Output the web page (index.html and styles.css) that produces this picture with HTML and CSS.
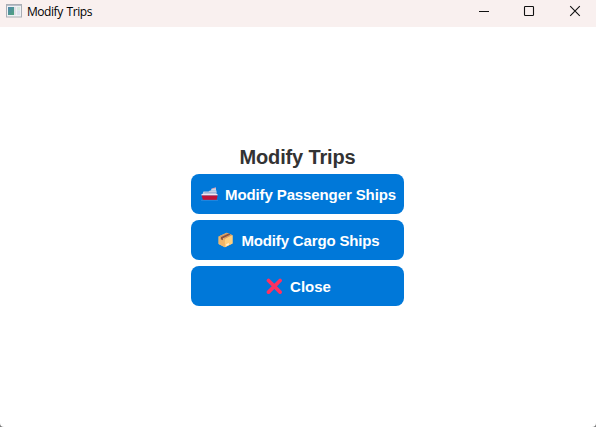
FILE: index.html
```html
<!DOCTYPE html>
<html lang="en">
<head>
<meta charset="utf-8">
<title>Modify Trips</title>
<link rel="stylesheet" href="styles.css">
</head>
<body>
<div class="window">
  <header class="titlebar">
    <svg class="app-icon" width="16" height="14" viewBox="0 0 16 14">
      <defs>
        <linearGradient id="screen" x1="0" y1="0" x2="1" y2="1">
          <stop offset="0" stop-color="#4f86ad"/>
          <stop offset="1" stop-color="#4fa37c"/>
        </linearGradient>
      </defs>
      <rect x=".5" y=".5" width="15" height="12.5" fill="#eff1f4" stroke="#aaaeb5"/>
      <path d="M1 1.5h14" stroke="#b9bfc9"/>
      <rect x="2" y="3" width="6" height="8" fill="url(#screen)"/>
      <rect x="8" y="3" width="2" height="8" fill="#e0e0e6"/>
      <rect x="11" y="3" width="3" height="3.5" fill="#d9eadf"/>
      <rect x="11" y="6.5" width="3" height="4.5" fill="#dde1ef"/>
    </svg>
    <span class="caption">Modify Trips</span>
    <div class="controls">
      <svg width="12" height="12" viewBox="0 0 12 12"><path d="M1 6.5h10" stroke="#111"/></svg>
      <svg width="12" height="12" viewBox="0 0 12 12"><rect x="1.5" y="1.5" width="9" height="9" rx=".8" fill="none" stroke="#111" stroke-width="1.1"/></svg>
      <svg width="12" height="12" viewBox="0 0 12 12"><path d="M1.200 1.200l9.600 9.600M10.800 1.200l-9.600 9.600" stroke="#111" stroke-width="1.1"/></svg>
    </div>
  </header>
  <main class="content">
    <h1 class="heading">Modify Trips</h1>
    <button class="action">
      <svg width="17" height="18" viewBox="0 0 17 18">
        <path d="M10.500 3.500l4.500-1.300V5h-4.500z" fill="#d9a0b5"/>
        <path d="M10.300 4.200L15 3.500v2.200H10z" fill="#ccd6e4"/>
        <path d="M1.500 9l1-2.500h5L9 5.500h6.500V9z" fill="#c3cfe2"/>
        <path d="M3.500 7.700h12" stroke="#8fa5cf" stroke-width=".8"/>
        <path d="M.5 9h16v1.600H.5z" fill="#f2e5ef"/>
        <path d="M.6 10.600h15.900l-.8 4.400H2z" fill="#be1238"/>
        <path d="M0 15.300h17" stroke="#328de0" stroke-width=".8"/>
      </svg>
      <span class="label passenger">Modify Passenger Ships</span>
    </button>
    <button class="action">
      <svg width="17" height="18" viewBox="0 0 18 18">
        <path d="M1.700 5.300L10.400 1.300l6 2.800v8.700l-8 4-6.700-3.500z" fill="#ffcc80"/>
        <path d="M1.700 5.300l8.700-4 6 2.800-8 3.900z" fill="#d99e61"/>
        <path d="M8.400 8l8-3.900v8.700l-8 4z" fill="#ffcf7d"/>
        <path d="M1.700 5.300L8.400 8v8.800l-6.700-3.500z" fill="#f0b568"/>
        <path d="M4 6.200l8.400-4 2 .9-8.200 4v2.200L4 8.300z" fill="#875242"/>
        <path d="M9.800 13.400l2.700-1.300v2l-2.700 1.300z" fill="#fff1dc"/>
      </svg>
      <span class="label cargo">Modify Cargo Ships</span>
    </button>
    <button class="action">
      <svg width="17" height="18" viewBox="0 0 17 18"><path d="M2.500 3.500l11.600 11.600M14.100 3.500L2.500 15.100" stroke="#ff3160" stroke-width="3.700" stroke-linecap="round"/></svg>
      <span class="label">Close</span>
    </button>
  </main>
</div>
</body>
</html>
```

FILE: styles.css
```css
* {
  box-sizing: border-box;
}

body {
  margin: 0;
  background: #777;
}

.window {
  height: 427px;
  display: flex;
  flex-direction: column;
  overflow: hidden;
  background: #fff;
  border-radius: 0 0 4px 4px;
}

.titlebar {
  height: 27px;
  flex: none;
  display: flex;
  align-items: flex-start;
  padding: 4px 15px 0 6px;
  background: #f9f0ef;
}

.caption {
  margin-left: 5px;
  font: 12px/16px "Open Sans", "Noto Sans", sans-serif;
  letter-spacing: -0.45px;
  word-spacing: 1.2px;
  color: #000;
}

.controls {
  width: 103px;
  display: grid;
  grid-template-columns: 45px 46px 12px;
  margin: 1px 0 0 auto;
}

.content {
  flex: 1;
  display: flex;
  flex-direction: column;
  align-items: center;
  gap: 6px;
  padding: 119px 1px 0 0;
  font-family: "Liberation Sans", Arial, sans-serif;
}

.heading {
  margin: 0 0 -1px;
  font-size: 20px;
  line-height: 23px;
  font-weight: bold;
  letter-spacing: -0.15px;
  color: #333;
}

.action {
  width: 213px;
  height: 40px;
  flex: none;
  display: flex;
  align-items: center;
  justify-content: center;
  gap: 7px;
  padding: 0 0 0 2px;
  border: 0;
  border-radius: 8px;
  background: #0078d9;
  color: #fff;
  font: bold 15px/20px "Liberation Sans", Arial, sans-serif;
}

.label {
  white-space: nowrap;
  padding-top: 1px;
}

.passenger {
  letter-spacing: -0.11px;
}

.cargo {
  letter-spacing: -0.15px;
}
```
